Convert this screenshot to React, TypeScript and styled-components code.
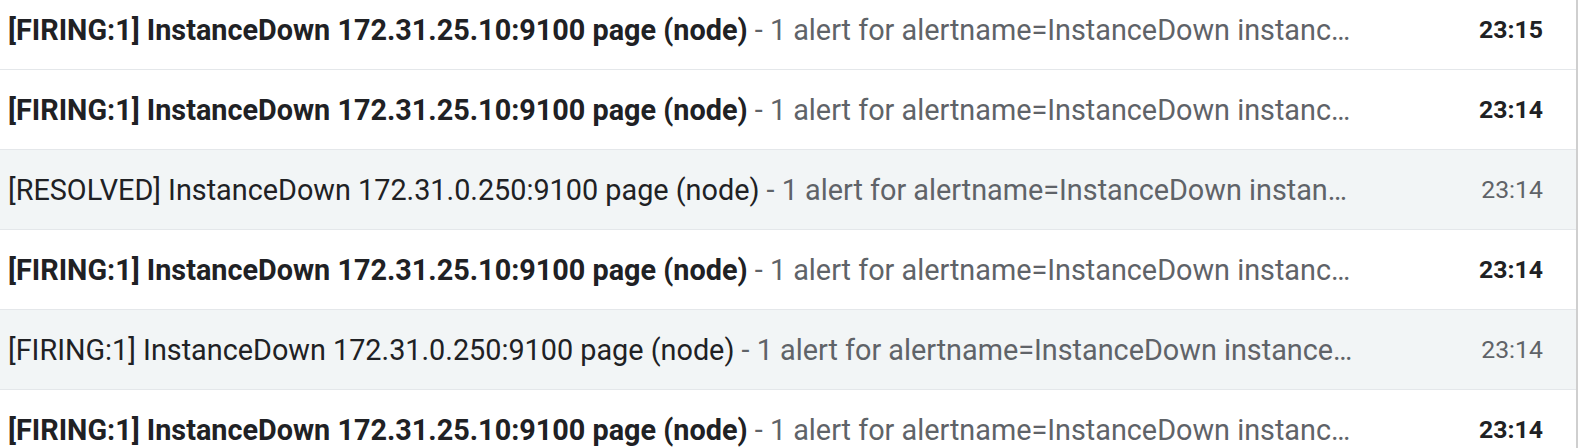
import React from "react";
import styled, { createGlobalStyle } from "styled-components";

const Global = createGlobalStyle`
  html, body { margin: 0; padding: 0; background: #ffffff; overflow: hidden; }
  body { font-family: Roboto, "Noto Sans", "Liberation Sans", sans-serif; }
`;

const Frame = styled.div`
  width: 1578px;
  height: 448px;
  overflow: hidden;
  box-sizing: border-box;
  border-right: 2px solid #cfcfcf;
`;

const List = styled.ul`
  list-style: none;
  margin: -10px 0 0 0;
  padding: 0;
`;

const Row = styled.li<{ $unread: boolean }>`
  display: flex;
  align-items: center;
  height: 79px;
  border-bottom: 1px solid #e4e7ea;
  background: ${(p) => (p.$unread ? "#ffffff" : "#f2f5f6")};
  padding-left: 8px;
  font-size: 28.8px;
  line-height: 34px;
`;

const Content = styled.div`
  flex: 1 1 auto;
  min-width: 0;
  white-space: nowrap;
  overflow: hidden;
  text-overflow: ellipsis;
  color: #5f6368;
`;

const Subject = styled.span<{ $unread: boolean }>`
  color: #202124;
  font-weight: ${(p) => (p.$unread ? 700 : 400)};
`;

const Snippet = styled.span`
  color: #5f6368;
  font-weight: 400;
`;

const Time = styled.div<{ $unread: boolean }>`
  flex: 0 0 220px;
  box-sizing: border-box;
  padding-right: 33px;
  text-align: right;
  font-size: 24.8px;
  line-height: 30px;
  color: ${(p) => (p.$unread ? "#202124" : "#5f6368")};
  font-weight: ${(p) => (p.$unread ? 700 : 400)};
`;

type Mail = { subject: string; snippet: string; time: string; unread: boolean };

const mails: Mail[] = [
  { subject: "[FIRING:1] InstanceDown 172.31.25.10:9100 page (node)", snippet: "1 alert for alertname=InstanceDown instance=172.31.25.10:9100 job=node", time: "23:15", unread: true },
  { subject: "[FIRING:1] InstanceDown 172.31.25.10:9100 page (node)", snippet: "1 alert for alertname=InstanceDown instance=172.31.25.10:9100 job=node", time: "23:14", unread: true },
  { subject: "[RESOLVED] InstanceDown 172.31.0.250:9100 page (node)", snippet: "1 alert for alertname=InstanceDown instance=172.31.0.250:9100 job=node", time: "23:14", unread: false },
  { subject: "[FIRING:1] InstanceDown 172.31.25.10:9100 page (node)", snippet: "1 alert for alertname=InstanceDown instance=172.31.25.10:9100 job=node", time: "23:14", unread: true },
  { subject: "[FIRING:1] InstanceDown 172.31.0.250:9100 page (node)", snippet: "1 alert for alertname=InstanceDown instance=172.31.0.250:9100 job=node", time: "23:14", unread: false },
  { subject: "[FIRING:1] InstanceDown 172.31.25.10:9100 page (node)", snippet: "1 alert for alertname=InstanceDown instance=172.31.25.10:9100 job=node", time: "23:14", unread: true },
];

export default function App() {
  return (
    <>
      <Global />
      <Frame>
        <List>
          {mails.map((m, i) => (
            <Row key={i} $unread={m.unread}>
              <Content>
                <Subject $unread={m.unread}>{m.subject}</Subject>
                <Snippet> - {m.snippet}</Snippet>
              </Content>
              <Time $unread={m.unread}>{m.time}</Time>
            </Row>
          ))}
        </List>
      </Frame>
    </>
  );
}
